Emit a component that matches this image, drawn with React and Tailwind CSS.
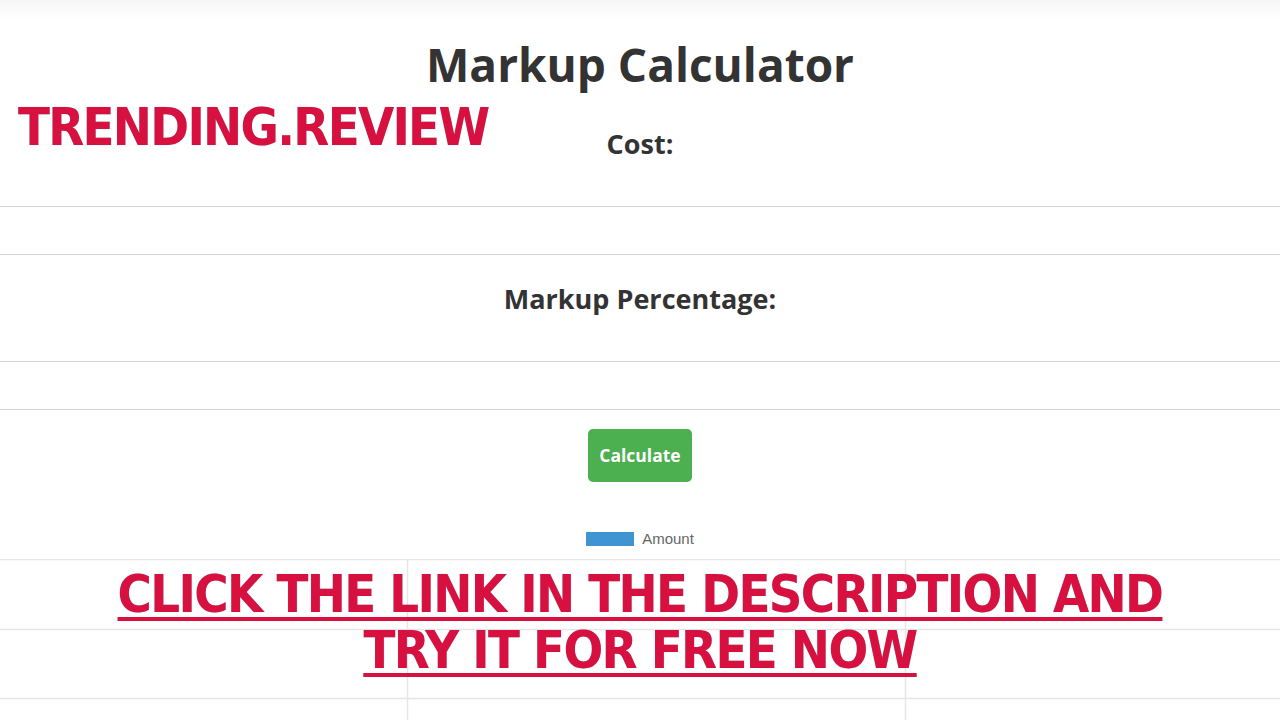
import React from "react";

function ChartGrid() {
  return (
    <svg width="1280" height="161" viewBox="0 0 1280 161" className="block">
      <line x1="0" y1="0.5" x2="1280" y2="0.5" stroke="#e6e6e6" strokeWidth="1.5" />
      <line x1="0" y1="70.5" x2="1280" y2="70.5" stroke="#e6e6e6" strokeWidth="1.5" />
      <line x1="0" y1="139.5" x2="1280" y2="139.5" stroke="#e6e6e6" strokeWidth="1.5" />
      <line x1="407.5" y1="0" x2="407.5" y2="161" stroke="#e6e6e6" strokeWidth="1.5" />
      <line x1="905.5" y1="0" x2="905.5" y2="161" stroke="#e6e6e6" strokeWidth="1.5" />
    </svg>
  );
}

export default function App() {
  return (
    <div className="relative w-[1280px] h-[720px] overflow-hidden bg-[linear-gradient(#f6f6f6,#ffffff_20px)] font-['Open_Sans',sans-serif] text-[#333]">
      <div className="flex flex-col items-center">
        <h1 className="mt-[35px] h-[58px] text-[46px] leading-[58px] font-bold text-[#333]">
          Markup Calculator
        </h1>
        <label className="mt-[36px] h-[30px] text-[27px] leading-[30px] font-bold text-[#333]">Cost:</label>
        <div className="mt-[47px] w-full h-[49px] border-y border-[#d4d4d4]" />
        <label className="mt-[29px] h-[30px] text-[27px] leading-[30px] font-bold text-[#333]">
          Markup Percentage:
        </label>
        <div className="mt-[47px] w-full h-[49px] border-y border-[#d4d4d4]" />
        <button className="mt-[19px] w-[104px] h-[53px] rounded-[5px] bg-[#4caf50] text-white text-[17.5px] font-bold">
          Calculate
        </button>
        <div className="mt-[49px] flex items-center gap-[8px] h-[16px]">
          <span className="w-[48px] h-[14px] bg-[#3f94d1]" />
          <span className="font-['Liberation_Sans',Arial,sans-serif] text-[15px] leading-[16px] text-[#666]">Amount</span>
        </div>
        <div className="mt-[12px] w-full">
          <ChartGrid />
        </div>
      </div>

      <div className="absolute left-[18px] top-[97px] font-['DejaVu_Sans_Condensed',sans-serif] font-bold text-[52px] leading-[60px] tracking-[-1.7px] text-[#d8103f] [text-shadow:0_0_1px_#7fd0d8]">
        TRENDING.REVIEW
      </div>

      <div className="absolute left-0 right-0 top-[566px] flex flex-col items-center font-['DejaVu_Sans_Condensed',sans-serif] font-bold text-[52px] leading-[56px] tracking-[-1.6px] text-[#d8103f] [text-shadow:0_0_1px_#7fd0d8]">
        <span className="underline decoration-[4px] underline-offset-[5px]">CLICK THE LINK IN THE DESCRIPTION AND</span>
        <span className="underline decoration-[4px] underline-offset-[5px]">TRY IT FOR FREE NOW</span>
      </div>
    </div>
  );
}
